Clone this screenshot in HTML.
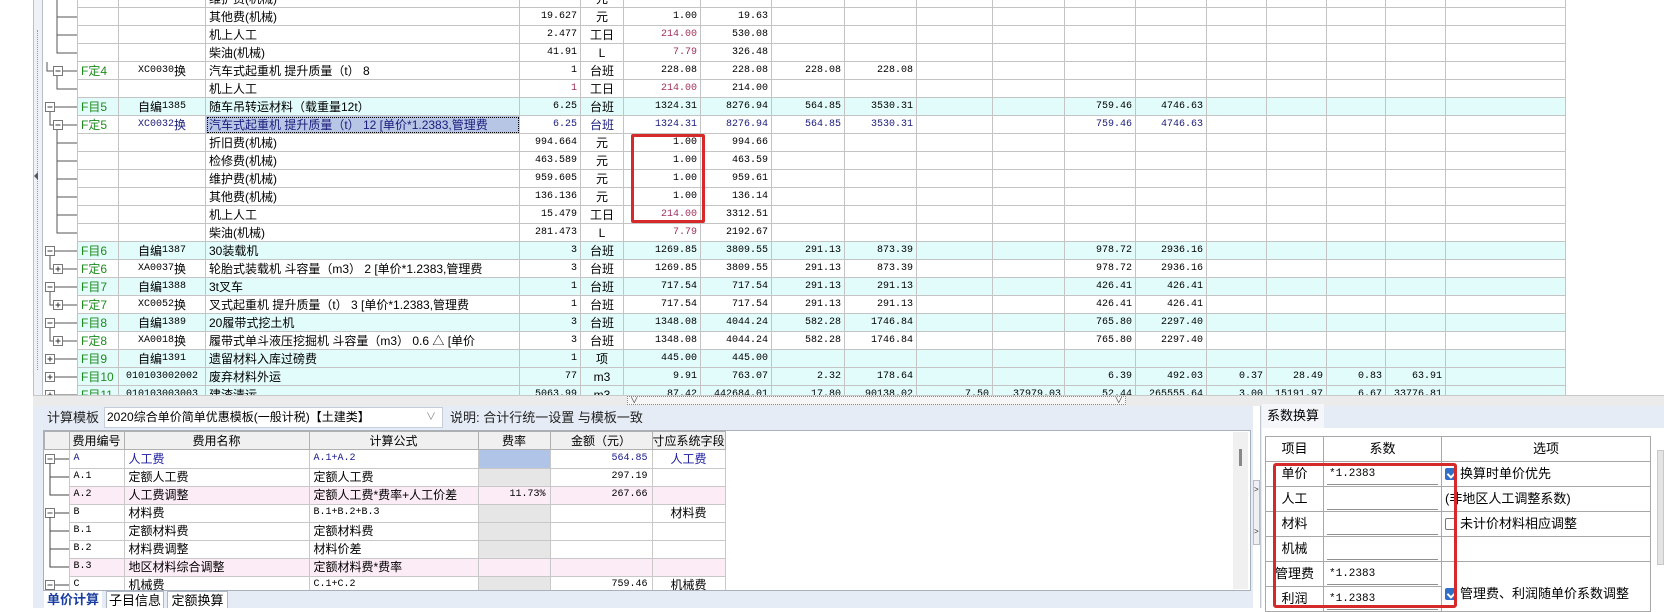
<!DOCTYPE html>
<html><head><meta charset="utf-8"><style>
*{margin:0;padding:0;box-sizing:border-box}
body{width:1664px;height:608px;overflow:hidden;background:#fff;position:relative;font-family:"Liberation Sans","Noto Sans CJK SC",sans-serif;font-size:12px;color:#000}
.abs{position:absolute}
svg{display:block}
table{border-collapse:collapse;table-layout:fixed}
#g{position:absolute;left:43px;top:-11px}
#g tr{height:18px}
#g td{height:18px;border:1px solid #c4c4c4;padding:0 3px;white-space:nowrap;overflow:hidden;line-height:16px;max-height:18px}
#g td.t{border:none;padding:0;position:relative}
#g td.n{text-align:right;font-family:"Liberation Mono",monospace;font-size:10px}
#g td.u{text-align:center}
#g td.k{text-align:center;font-family:"Liberation Mono",monospace;font-size:10px}
#g td.k span{font-family:"Noto Sans CJK SC",sans-serif;font-size:12px;display:inline-block;height:16px;line-height:16px;vertical-align:top}
#g td.f{color:#1e8a1e}
tr.cy td:not(.t){background:#e2fbfb}
tr.bl td:not(.t){color:#1a1a7a}
.r{color:#a0305a!important}
#b{position:absolute;left:0;top:0}
#b tr{height:18px}
#b td{height:18px;border:1px solid #c8c8c8;padding:0 4px;white-space:nowrap;overflow:hidden;line-height:16px}
#b th{height:18px;border:1px solid #b0b0b0;background:#f0f0f0;font-weight:normal;white-space:nowrap;overflow:hidden;line-height:16px}
#b td.m{font-family:"Liberation Mono",monospace;font-size:10px}
#b td.rt{background:#e6e6e6;text-align:right;font-family:"Liberation Mono",monospace;font-size:10px}
#b td.am{text-align:right;font-family:"Liberation Mono",monospace;font-size:10px}
#b tr.pk td{background:#fcecf6}
#b td.tt{border:none;padding:0;position:relative}
#x{position:absolute;left:1265px;top:436px;width:385px}
#x tr{height:25px}
#x td{border:1px solid #a8a8a8;height:25px;padding:0 3px;font-size:13px;line-height:18px}
.inp{display:block;height:21px;border-bottom:1px solid #909090;font-family:"Liberation Mono",monospace;font-size:11px;line-height:21px;padding-left:2px}
.cb{display:inline-block;width:12px;height:12px;border:1px solid #777;border-radius:2px;vertical-align:-2px;margin-right:3px;background:#fff}
.cb.on{background:#2f6fc8;border-color:#2f6fc8;position:relative}
.cb.on:after{content:"";position:absolute;left:3px;top:0px;width:4px;height:7px;border:solid #fff;border-width:0 2px 2px 0;transform:rotate(45deg)}
</style></head><body>

<div class="abs" style="left:33px;top:0;width:10px;height:395px;background:#eef1f5;border-left:1px solid #b8c0cc;border-right:1px solid #b8c0cc"></div>
<div class="abs" style="left:37px;top:30px;height:340px;border-left:1px dotted #999"></div>
<div class="abs" style="left:34px;top:172px;width:0;height:0;border-top:4px solid transparent;border-bottom:4px solid transparent;border-right:4px solid #556"></div>

<table id="g">
<colgroup><col style="width:34px"><col style="width:41px"><col style="width:87px"><col style="width:314px"><col style="width:61px"><col style="width:43px"><col style="width:77px"><col style="width:71px"><col style="width:73px"><col style="width:72px"><col style="width:76px"><col style="width:72px"><col style="width:71px"><col style="width:71px"><col style="width:60px"><col style="width:60px"><col style="width:59px"><col style="width:60px"><col style="width:120px"></colgroup>
<tr><td class="t"><svg width="34" height="18"><path d="M14 0V18M14 9H34" stroke="#555"/></svg></td><td></td><td></td><td>维护费(机械)</td><td class="n">115.882</td><td class="u">元</td><td class="n">1.00</td><td class="n">115.88</td><td></td><td></td><td></td><td></td><td></td><td></td><td></td><td></td><td></td><td></td><td></td></tr>
<tr><td class="t"><svg width="34" height="18"><path d="M14 0V18M14 9H34" stroke="#555"/></svg></td><td></td><td></td><td>其他费(机械)</td><td class="n">19.627</td><td class="u">元</td><td class="n">1.00</td><td class="n">19.63</td><td></td><td></td><td></td><td></td><td></td><td></td><td></td><td></td><td></td><td></td><td></td></tr>
<tr><td class="t"><svg width="34" height="18"><path d="M14 0V18M14 9H34" stroke="#555"/></svg></td><td></td><td></td><td>机上人工</td><td class="n">2.477</td><td class="u">工日</td><td class="n r">214.00</td><td class="n">530.08</td><td></td><td></td><td></td><td></td><td></td><td></td><td></td><td></td><td></td><td></td><td></td></tr>
<tr><td class="t"><svg width="34" height="18"><path d="M14 0V9H34" stroke="#555" fill="none"/></svg></td><td></td><td></td><td>柴油(机械)</td><td class="n">41.91</td><td class="u">L</td><td class="n r">7.79</td><td class="n">326.48</td><td></td><td></td><td></td><td></td><td></td><td></td><td></td><td></td><td></td><td></td><td></td></tr>
<tr><td class="t"><svg width="34" height="18"><path d="M4 0V9H10M19 9H34M14 13V18" stroke="#555" fill="none"/><rect x="10.5" y="4.5" width="9" height="9" fill="#fff" stroke="#777"/><path d="M12.5 9H17.5" stroke="#333"/></svg></td><td class="f">F定4</td><td class="k">XC0030<span>换</span></td><td>汽车式起重机 提升质量（t） 8</td><td class="n">1</td><td class="u">台班</td><td class="n">228.08</td><td class="n">228.08</td><td class="n">228.08</td><td class="n">228.08</td><td></td><td></td><td></td><td></td><td></td><td></td><td></td><td></td><td></td></tr>
<tr><td class="t"><svg width="34" height="18"><path d="M14 0V9H34" stroke="#555" fill="none"/></svg></td><td></td><td></td><td>机上人工</td><td class="n r">1</td><td class="u">工日</td><td class="n r">214.00</td><td class="n">214.00</td><td></td><td></td><td></td><td></td><td></td><td></td><td></td><td></td><td></td><td></td><td></td></tr>
<tr class="cy"><td class="t"><svg width="34" height="18"><path d="M12 9H34M7 13V18" stroke="#555" fill="none"/><rect x="2.5" y="4.5" width="9" height="9" fill="#fff" stroke="#777"/><path d="M4.5 9H9.5" stroke="#333"/></svg></td><td class="f">F目5</td><td class="k"><span>自编</span>1385</td><td>随车吊转运材料（载重量12t）</td><td class="n">6.25</td><td class="u">台班</td><td class="n">1324.31</td><td class="n">8276.94</td><td class="n">564.85</td><td class="n">3530.31</td><td></td><td></td><td class="n">759.46</td><td class="n">4746.63</td><td></td><td></td><td></td><td></td><td></td></tr>
<tr class="bl"><td class="t"><svg width="34" height="18"><path d="M7 0V9H10M19 9H34M14 13V18" stroke="#555" fill="none"/><rect x="10.5" y="4.5" width="9" height="9" fill="#fff" stroke="#777"/><path d="M12.5 9H17.5" stroke="#333"/></svg></td><td class="f" style="color:#1e8a1e!important">F定5</td><td class="k">XC0032<span>换</span></td><td style="background:#b8c6e6;outline:1px dotted #000;outline-offset:-2px">汽车式起重机 提升质量（t） 12 [单价*1.2383,管理费</td><td class="n">6.25</td><td class="u">台班</td><td class="n">1324.31</td><td class="n">8276.94</td><td class="n">564.85</td><td class="n">3530.31</td><td></td><td></td><td class="n">759.46</td><td class="n">4746.63</td><td></td><td></td><td></td><td></td><td></td></tr>
<tr><td class="t"><svg width="34" height="18"><path d="M14 0V18M14 9H34" stroke="#555"/></svg></td><td></td><td></td><td>折旧费(机械)</td><td class="n">994.664</td><td class="u">元</td><td class="n">1.00</td><td class="n">994.66</td><td></td><td></td><td></td><td></td><td></td><td></td><td></td><td></td><td></td><td></td><td></td></tr>
<tr><td class="t"><svg width="34" height="18"><path d="M14 0V18M14 9H34" stroke="#555"/></svg></td><td></td><td></td><td>检修费(机械)</td><td class="n">463.589</td><td class="u">元</td><td class="n">1.00</td><td class="n">463.59</td><td></td><td></td><td></td><td></td><td></td><td></td><td></td><td></td><td></td><td></td><td></td></tr>
<tr><td class="t"><svg width="34" height="18"><path d="M14 0V18M14 9H34" stroke="#555"/></svg></td><td></td><td></td><td>维护费(机械)</td><td class="n">959.605</td><td class="u">元</td><td class="n">1.00</td><td class="n">959.61</td><td></td><td></td><td></td><td></td><td></td><td></td><td></td><td></td><td></td><td></td><td></td></tr>
<tr><td class="t"><svg width="34" height="18"><path d="M14 0V18M14 9H34" stroke="#555"/></svg></td><td></td><td></td><td>其他费(机械)</td><td class="n">136.136</td><td class="u">元</td><td class="n">1.00</td><td class="n">136.14</td><td></td><td></td><td></td><td></td><td></td><td></td><td></td><td></td><td></td><td></td><td></td></tr>
<tr><td class="t"><svg width="34" height="18"><path d="M14 0V18M14 9H34" stroke="#555"/></svg></td><td></td><td></td><td>机上人工</td><td class="n">15.479</td><td class="u">工日</td><td class="n r">214.00</td><td class="n">3312.51</td><td></td><td></td><td></td><td></td><td></td><td></td><td></td><td></td><td></td><td></td><td></td></tr>
<tr><td class="t"><svg width="34" height="18"><path d="M14 0V9H34" stroke="#555" fill="none"/></svg></td><td></td><td></td><td>柴油(机械)</td><td class="n">281.473</td><td class="u">L</td><td class="n r">7.79</td><td class="n">2192.67</td><td></td><td></td><td></td><td></td><td></td><td></td><td></td><td></td><td></td><td></td><td></td></tr>
<tr class="cy"><td class="t"><svg width="34" height="18"><path d="M12 9H34M7 13V18" stroke="#555" fill="none"/><rect x="2.5" y="4.5" width="9" height="9" fill="#fff" stroke="#777"/><path d="M4.5 9H9.5" stroke="#333"/></svg></td><td class="f">F目6</td><td class="k"><span>自编</span>1387</td><td>30装载机</td><td class="n">3</td><td class="u">台班</td><td class="n">1269.85</td><td class="n">3809.55</td><td class="n">291.13</td><td class="n">873.39</td><td></td><td></td><td class="n">978.72</td><td class="n">2936.16</td><td></td><td></td><td></td><td></td><td></td></tr>
<tr><td class="t"><svg width="34" height="18"><path d="M7 0V9H10M19 9H34" stroke="#555" fill="none"/><rect x="10.5" y="4.5" width="9" height="9" fill="#fff" stroke="#777"/><path d="M12.5 9H17.5M15 6.5V11.5" stroke="#333"/></svg></td><td class="f">F定6</td><td class="k">XA0037<span>换</span></td><td>轮胎式装载机 斗容量（m3） 2 [单价*1.2383,管理费</td><td class="n">3</td><td class="u">台班</td><td class="n">1269.85</td><td class="n">3809.55</td><td class="n">291.13</td><td class="n">873.39</td><td></td><td></td><td class="n">978.72</td><td class="n">2936.16</td><td></td><td></td><td></td><td></td><td></td></tr>
<tr class="cy"><td class="t"><svg width="34" height="18"><path d="M12 9H34M7 13V18" stroke="#555" fill="none"/><rect x="2.5" y="4.5" width="9" height="9" fill="#fff" stroke="#777"/><path d="M4.5 9H9.5" stroke="#333"/></svg></td><td class="f">F目7</td><td class="k"><span>自编</span>1388</td><td>3t叉车</td><td class="n">1</td><td class="u">台班</td><td class="n">717.54</td><td class="n">717.54</td><td class="n">291.13</td><td class="n">291.13</td><td></td><td></td><td class="n">426.41</td><td class="n">426.41</td><td></td><td></td><td></td><td></td><td></td></tr>
<tr><td class="t"><svg width="34" height="18"><path d="M7 0V9H10M19 9H34" stroke="#555" fill="none"/><rect x="10.5" y="4.5" width="9" height="9" fill="#fff" stroke="#777"/><path d="M12.5 9H17.5M15 6.5V11.5" stroke="#333"/></svg></td><td class="f">F定7</td><td class="k">XC0052<span>换</span></td><td>叉式起重机 提升质量（t） 3 [单价*1.2383,管理费</td><td class="n">1</td><td class="u">台班</td><td class="n">717.54</td><td class="n">717.54</td><td class="n">291.13</td><td class="n">291.13</td><td></td><td></td><td class="n">426.41</td><td class="n">426.41</td><td></td><td></td><td></td><td></td><td></td></tr>
<tr class="cy"><td class="t"><svg width="34" height="18"><path d="M12 9H34M7 13V18" stroke="#555" fill="none"/><rect x="2.5" y="4.5" width="9" height="9" fill="#fff" stroke="#777"/><path d="M4.5 9H9.5" stroke="#333"/></svg></td><td class="f">F目8</td><td class="k"><span>自编</span>1389</td><td>20履带式挖土机</td><td class="n">3</td><td class="u">台班</td><td class="n">1348.08</td><td class="n">4044.24</td><td class="n">582.28</td><td class="n">1746.84</td><td></td><td></td><td class="n">765.80</td><td class="n">2297.40</td><td></td><td></td><td></td><td></td><td></td></tr>
<tr><td class="t"><svg width="34" height="18"><path d="M7 0V9H10M19 9H34" stroke="#555" fill="none"/><rect x="10.5" y="4.5" width="9" height="9" fill="#fff" stroke="#777"/><path d="M12.5 9H17.5M15 6.5V11.5" stroke="#333"/></svg></td><td class="f">F定8</td><td class="k">XA0018<span>换</span></td><td>履带式单斗液压挖掘机 斗容量（m3） 0.6 △ [单价</td><td class="n">3</td><td class="u">台班</td><td class="n">1348.08</td><td class="n">4044.24</td><td class="n">582.28</td><td class="n">1746.84</td><td></td><td></td><td class="n">765.80</td><td class="n">2297.40</td><td></td><td></td><td></td><td></td><td></td></tr>
<tr class="cy"><td class="t"><svg width="34" height="18"><path d="M12 9H34" stroke="#555" fill="none"/><rect x="2.5" y="4.5" width="9" height="9" fill="#fff" stroke="#777"/><path d="M4.5 9H9.5M7 6.5V11.5" stroke="#333"/></svg></td><td class="f">F目9</td><td class="k"><span>自编</span>1391</td><td>遗留材料入库过磅费</td><td class="n">1</td><td class="u">项</td><td class="n">445.00</td><td class="n">445.00</td><td></td><td></td><td></td><td></td><td></td><td></td><td></td><td></td><td></td><td></td><td></td></tr>
<tr class="cy"><td class="t"><svg width="34" height="18"><path d="M12 9H34" stroke="#555" fill="none"/><rect x="2.5" y="4.5" width="9" height="9" fill="#fff" stroke="#777"/><path d="M4.5 9H9.5M7 6.5V11.5" stroke="#333"/></svg></td><td class="f">F目10</td><td class="k">010103002002</td><td>废弃材料外运</td><td class="n">77</td><td class="u">m3</td><td class="n">9.91</td><td class="n">763.07</td><td class="n">2.32</td><td class="n">178.64</td><td></td><td></td><td class="n">6.39</td><td class="n">492.03</td><td class="n">0.37</td><td class="n">28.49</td><td class="n">0.83</td><td class="n">63.91</td><td></td></tr>
<tr class="cy"><td class="t"><svg width="34" height="18"><path d="M12 9H34" stroke="#555" fill="none"/><rect x="2.5" y="4.5" width="9" height="9" fill="#fff" stroke="#777"/><path d="M4.5 9H9.5M7 6.5V11.5" stroke="#333"/></svg></td><td class="f">F目11</td><td class="k">010103003003</td><td>建渣清运</td><td class="n">5063.99</td><td class="u">m3</td><td class="n">87.42</td><td class="n">442684.01</td><td class="n">17.80</td><td class="n">90138.02</td><td class="n">7.50</td><td class="n">37979.03</td><td class="n">52.44</td><td class="n">265555.64</td><td class="n">3.00</td><td class="n">15191.97</td><td class="n">6.67</td><td class="n">33776.81</td><td></td></tr>
</table>

<div class="abs" style="left:631px;top:134px;width:74px;height:89px;border:3px solid #d42a2a;border-radius:2px"></div>

<div class="abs" style="left:33px;top:395px;width:1631px;height:11px;background:#ebebeb;border-top:1px solid #c8c8c8"></div>
<div class="abs" style="left:627px;top:396px;width:499px;height:9px;border:1px dotted #888;background:#f6f6f6;font-size:8px;line-height:7px;color:#333">&nbsp;∨<span style="float:right">∨&nbsp;</span></div>

<div class="abs" style="left:33px;top:406px;width:1220px;height:202px;background:#e6ecf6"></div>
<div class="abs" style="left:47px;top:407px;font-size:13px;line-height:22px;color:#222">计算模板</div>
<div class="abs" style="left:104px;top:407px;width:339px;height:21px;background:#fff;border:1px solid #c6ceda;font-size:12px;line-height:19px;padding-left:2px">2020综合单价简单优惠模板(一般计税)【土建类】<span style="position:absolute;right:6px;color:#888;font-size:10px">∨</span></div>
<div class="abs" style="left:450px;top:407px;font-size:13px;line-height:22px;color:#222">说明: 合计行统一设置 与模板一致</div>
<div class="abs" style="left:43px;top:430px;width:1208px;height:161px;background:#fff;border:1px solid #a8b0bc"></div>
<div class="abs" style="left:1233px;top:432px;width:15px;height:157px;background:#f0f0f0"></div>
<div class="abs" style="left:1239px;top:449px;width:3px;height:17px;background:#888"></div>
<div class="abs" style="left:44px;top:431px;width:1189px;height:159px;overflow:hidden">
<table id="b">
<colgroup><col style="width:24px"><col style="width:55px"><col style="width:185px"><col style="width:169px"><col style="width:72px"><col style="width:102px"><col style="width:67px"></colgroup>
<tr><th></th><th>费用编号</th><th>费用名称</th><th>计算公式</th><th>费率</th><th>金额（元）</th><th>寸应系统字段</th></tr>
<tr><td class="tt"><svg width="24" height="18"><rect x="0.5" y="4.5" width="9" height="9" fill="#fff" stroke="#777"/><path d="M2.5 9H7.5M10 9H24M5 13V18" stroke="#444"/></svg></td><td class="m" style="color:#1a1a8a">A</td><td style="color:#1a1aa0">人工费</td><td class="m" style="color:#1a1a8a">A.1+A.2</td><td class="rt" style="background:#afc4e6"></td><td class="am" style="color:#1a1a8a">564.85</td><td style="text-align:center;color:#1a1aa0">人工费</td></tr>
<tr><td class="tt"><svg width="24" height="18"><path d="M5 0V18M5 9H24" stroke="#444"/></svg></td><td class="m">A.1</td><td>定额人工费</td><td>定额人工费</td><td class="rt"></td><td class="am">297.19</td><td></td></tr>
<tr class="pk"><td class="tt" style="background:#fff!important"><svg width="24" height="18"><path d="M5 0V9H24" stroke="#444" fill="none"/></svg></td><td class="m">A.2</td><td>人工费调整</td><td>定额人工费*费率+人工价差</td><td class="rt">11.73%</td><td class="am">267.66</td><td></td></tr>
<tr><td class="tt"><svg width="24" height="18"><rect x="0.5" y="4.5" width="9" height="9" fill="#fff" stroke="#777"/><path d="M2.5 9H7.5M10 9H24M5 13V18" stroke="#444"/></svg></td><td class="m">B</td><td>材料费</td><td class="m">B.1+B.2+B.3</td><td class="rt"></td><td class="am"></td><td style="text-align:center">材料费</td></tr>
<tr><td class="tt"><svg width="24" height="18"><path d="M5 0V18M5 9H24" stroke="#444"/></svg></td><td class="m">B.1</td><td>定额材料费</td><td>定额材料费</td><td class="rt"></td><td class="am"></td><td></td></tr>
<tr><td class="tt"><svg width="24" height="18"><path d="M5 0V18M5 9H24" stroke="#444"/></svg></td><td class="m">B.2</td><td>材料费调整</td><td>材料价差</td><td class="rt"></td><td class="am"></td><td></td></tr>
<tr class="pk"><td class="tt" style="background:#fff!important"><svg width="24" height="18"><path d="M5 0V9H24" stroke="#444" fill="none"/></svg></td><td class="m">B.3</td><td>地区材料综合调整</td><td>定额材料费*费率</td><td class="rt"></td><td class="am"></td><td></td></tr>
<tr><td class="tt"><svg width="24" height="18"><rect x="0.5" y="4.5" width="9" height="9" fill="#fff" stroke="#777"/><path d="M2.5 9H7.5M10 9H24" stroke="#444"/></svg></td><td class="m">C</td><td>机械费</td><td class="m">C.1+C.2</td><td class="rt"></td><td class="am">759.46</td><td style="text-align:center">机械费</td></tr>
</table></div>
<div class="abs" style="left:44px;top:591px;width:58px;height:17px;background:#fff;color:#1a3fa0;font-weight:bold;font-size:13px;line-height:18px;text-align:center">单价计算</div>
<div class="abs" style="left:106px;top:591px;width:58px;height:17px;background:#fff;border:1px solid #b0b8c4;border-bottom:none;font-size:13px;line-height:17px;text-align:center">子目信息</div>
<div class="abs" style="left:167px;top:591px;width:61px;height:17px;background:#fff;border:1px solid #b0b8c4;border-bottom:none;font-size:13px;line-height:17px;text-align:center">定额换算</div>

<div class="abs" style="left:1253px;top:480px;width:7px;height:65px;background:#eef0f4;border:1px solid #b8bcc4;font-size:8px;line-height:10px;color:#333"><div style="margin-top:4px">&gt;</div><div style="margin-top:32px">&gt;</div></div>

<div class="abs" style="left:1260px;top:406px;width:404px;height:202px;background:#e6ecf6;border-left:1px solid #c0c8d4"></div>
<div class="abs" style="left:1262px;top:404px;width:62px;height:24px;background:#f4f6fa;font-size:13px;line-height:24px;text-align:center">系数换算</div>
<div class="abs" style="left:1262px;top:428px;width:402px;height:180px;background:#fff"></div>
<div class="abs" style="left:1657px;top:450px;width:7px;height:115px;background:#e4e4e4;border:1px solid #c8c8c8"></div>
<table id="x">
<colgroup><col style="width:58px"><col style="width:118px"><col style="width:209px"></colgroup>
<tr><td style="text-align:center">项目</td><td style="text-align:center">系数</td><td style="text-align:center">选项</td></tr>
<tr><td style="text-align:center">单价</td><td><span class="inp">*1.2383</span></td><td><span class="cb on"></span>换算时单价优先</td></tr>
<tr><td style="text-align:center">人工</td><td><span class="inp"></span></td><td>(非地区人工调整系数)</td></tr>
<tr><td style="text-align:center">材料</td><td><span class="inp"></span></td><td><span class="cb"></span>未计价材料相应调整</td></tr>
<tr><td style="text-align:center">机械</td><td><span class="inp"></span></td><td style="border-bottom:none"></td></tr>
<tr><td style="text-align:center;padding:0">管理费</td><td><span class="inp">*1.2383</span></td><td rowspan="2" style="vertical-align:middle;padding-top:14px"><span class="cb on"></span>管理费、利润随单价系数调整</td></tr>
<tr><td style="text-align:center">利润</td><td><span class="inp">*1.2383</span></td></tr>
</table>
<div class="abs" style="left:1273px;top:463px;width:184px;height:145px;border:3px solid #d42a2a;border-radius:3px"></div>
</body></html>
